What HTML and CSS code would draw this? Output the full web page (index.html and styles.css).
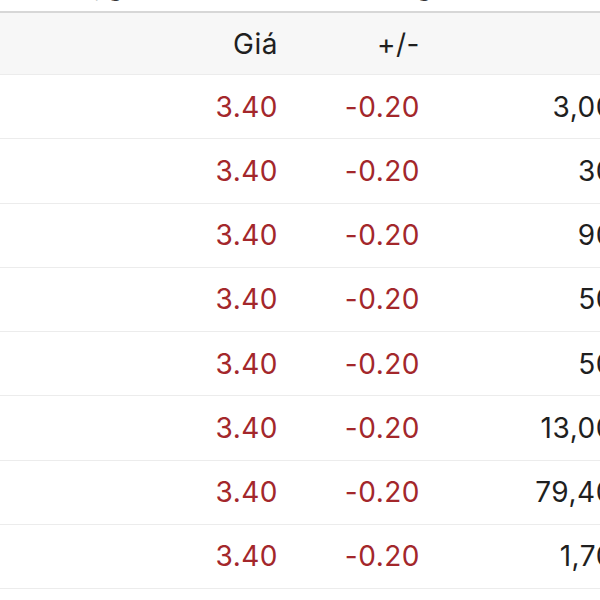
FILE: index.html
```html
<!DOCTYPE html>
<html lang="vi">
<head>
<meta charset="utf-8">
<link rel="stylesheet" href="styles.css">
</head>
<body>
<div class="page">
  <div class="caption"><span>Đơn vị giá: 1,000 VNĐ, khối lượng: 1 cổ phiếu</span></div>
  <div class="table">
    <div class="row head">
      <div class="cell"></div>
      <div class="cell">Giá</div>
      <div class="cell">+/-</div>
      <div class="cell"></div>
    </div>
    <div class="row"><div class="cell"></div><div class="cell down">3.40</div><div class="cell down">-0.20</div><div class="cell">3,000</div></div>
    <div class="row"><div class="cell"></div><div class="cell down">3.40</div><div class="cell down">-0.20</div><div class="cell">300</div></div>
    <div class="row"><div class="cell"></div><div class="cell down">3.40</div><div class="cell down">-0.20</div><div class="cell">900</div></div>
    <div class="row"><div class="cell"></div><div class="cell down">3.40</div><div class="cell down">-0.20</div><div class="cell">500</div></div>
    <div class="row"><div class="cell"></div><div class="cell down">3.40</div><div class="cell down">-0.20</div><div class="cell">500</div></div>
    <div class="row"><div class="cell"></div><div class="cell down">3.40</div><div class="cell down">-0.20</div><div class="cell">13,000</div></div>
    <div class="row"><div class="cell"></div><div class="cell down">3.40</div><div class="cell down">-0.20</div><div class="cell">79,400</div></div>
    <div class="row"><div class="cell"></div><div class="cell down">3.40</div><div class="cell down">-0.20</div><div class="cell">1,700</div></div>
  </div>
</div>
</body>
</html>
```
FILE: styles.css
```css
html, body {
  margin: 0;
  padding: 0;
  background: #ffffff;
  overflow: hidden;
}
.page {
  width: 640px;
  height: 600px;
  overflow: hidden;
  font-family: Inter, "Liberation Sans", sans-serif;
  color: #1f1f1f;
}
.caption {
  height: 11px;
  overflow: hidden;
}
.caption span {
  display: block;
  margin-top: -31px;
  padding-left: 22px;
  font-size: 26px;
  line-height: 34px;
  color: #333;
  white-space: nowrap;
}
.table {
  border-top: 2px solid #d7d7d7;
}
.row {
  display: grid;
  grid-template-columns: 140px 138px 142px 212px;
  height: 63.25px;
  border-bottom: 1px solid #ececec;
  align-items: center;
}
.row.head {
  height: 61px;
  background: #f7f7f7;
}
.cell {
  text-align: right;
  font-size: 28px;
  letter-spacing: 0.5px;
  white-space: nowrap;
}
.down {
  color: #a3272b;
}
```
